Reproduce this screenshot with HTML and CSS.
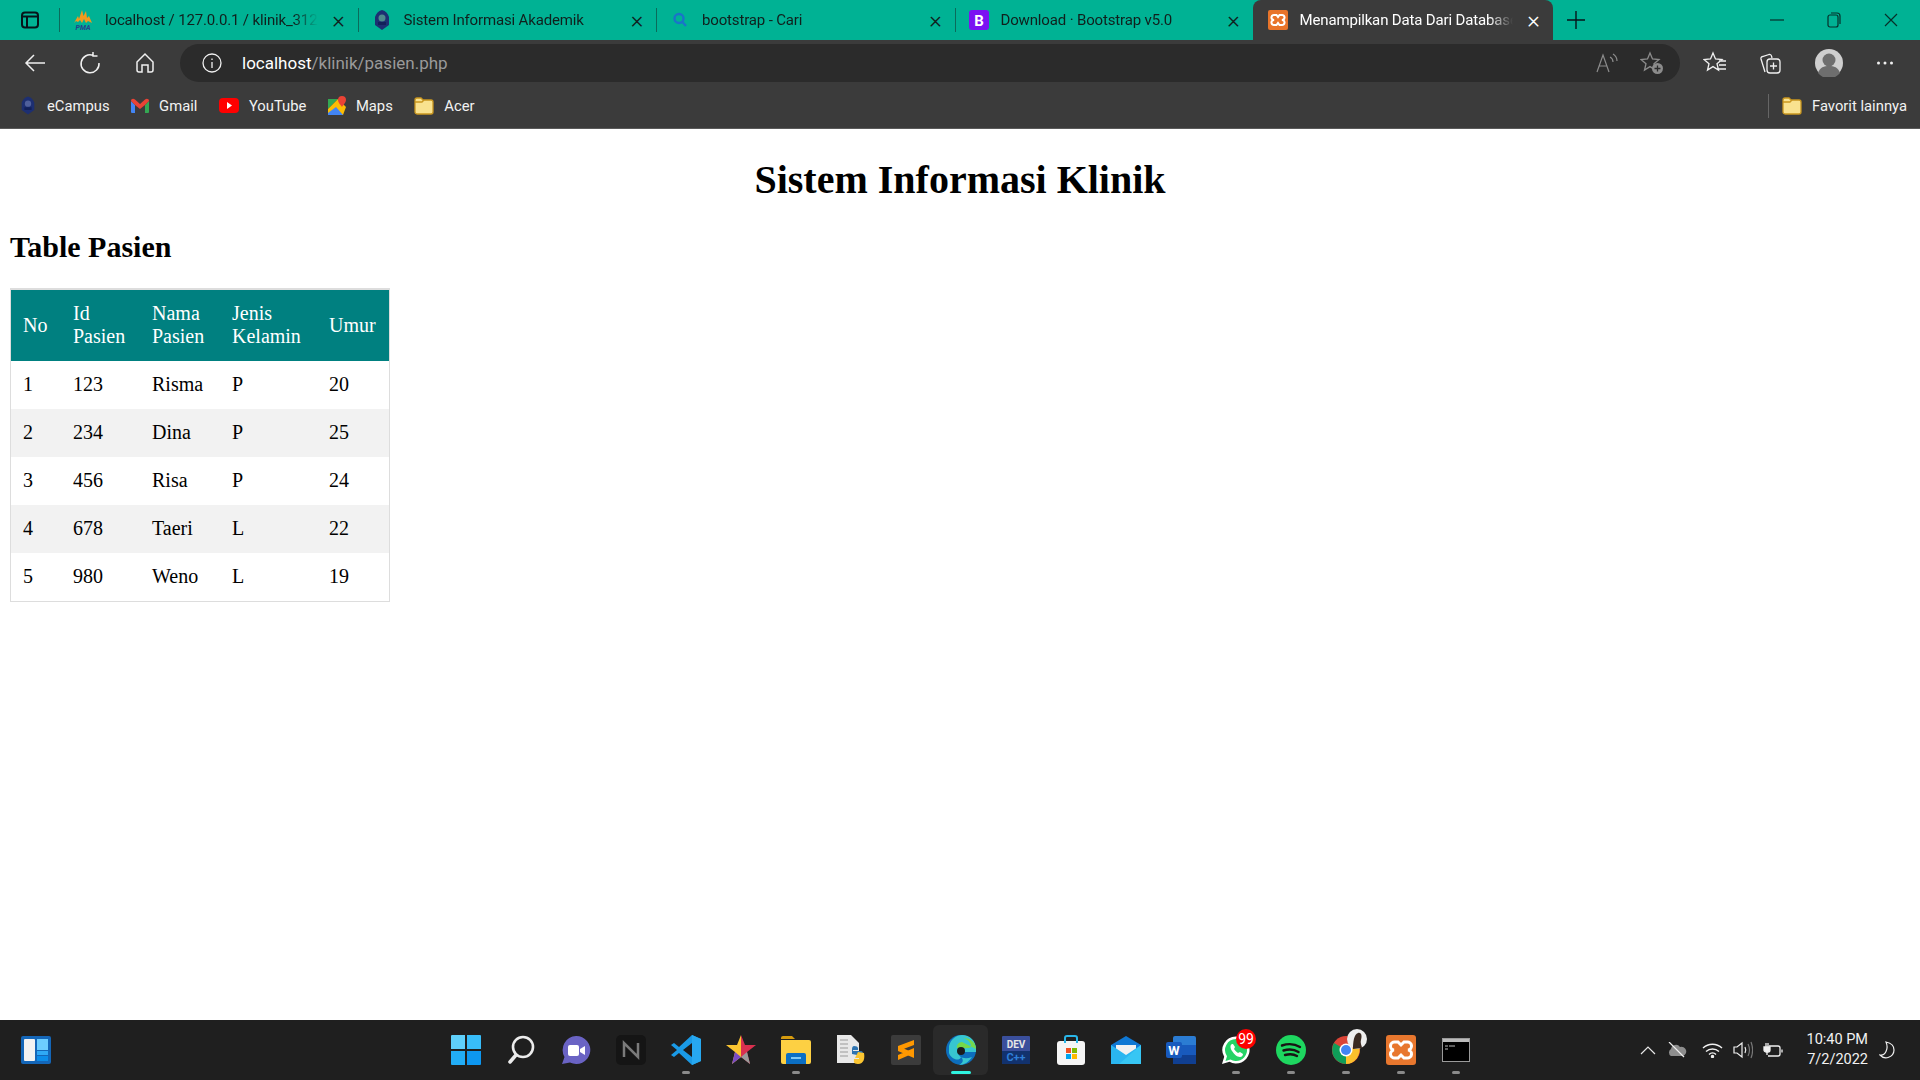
FILE: index.html
```html
<!DOCTYPE html>
<html lang="id">
<head>
  <meta charset="UTF-8">
  <title>Menampilkan Data Dari Database</title>
  <link rel="stylesheet" href="styles.css">
</head>
<body>
  <div class="screen">
    <!-- tab strip -->
    <div class="tabstrip">
      <div class="tab-actions">
        <svg class="tabs-btn" width="18" height="18" viewBox="0 0 18 18" fill="none" stroke="#06141a" stroke-width="2"><rect x="1" y="1.5" width="16" height="15" rx="3"/><path d="M1 5.5h16M6 5.500v11"/></svg>
      </div>
      <div class="tab">
        <svg class="favicon" viewBox="0 0 20 20"><path d="M1 13 5 6l1 3 3-9 1.500 6L13 1l1 7 2-2 3 7-4-2-2 2-2-4-2 4-2-3-2 2-2-1-2 2z" fill="#f29a1d"/><text x="10" y="19.500" class="pma">PMA</text></svg>
        <span class="tab-title">localhost / 127.0.0.1 / klinik_3120</span>
        <span class="tab-close">×</span>
      </div>
      <div class="tab">
        <svg class="favicon" viewBox="0 0 20 20"><path d="M10 0c4 1 6 4 7 7v8l-7 5-7-5V7c1-3 3-6 7-7z" fill="#1d2f72"/><circle cx="10" cy="8" r="3.500" fill="#4f8a8b"/><path d="M6 12h8v3H6z" fill="#12205a"/></svg>
        <span class="tab-title">Sistem Informasi Akademik</span>
        <span class="tab-close">×</span>
      </div>
      <div class="tab">
        <svg class="favicon" viewBox="0 0 20 20" fill="none" stroke="#1a73c9" stroke-width="2.400"><circle cx="9" cy="8.500" r="4.500"/><path d="m12.500 12 3.500 4"/></svg>
        <span class="tab-title">bootstrap - Cari</span>
        <span class="tab-close">×</span>
      </div>
      <div class="tab tab-last">
        <svg class="favicon" viewBox="0 0 20 20"><rect width="20" height="20" rx="3" fill="#7b12f2"/><text x="10" y="15.500" class="favicon-b">B</text></svg>
        <span class="tab-title">Download · Bootstrap v5.0</span>
        <span class="tab-close">×</span>
      </div>
      <div class="tab tab-active">
        <svg class="favicon" viewBox="0 0 20 20"><rect width="20" height="20" rx="2" fill="#e8742a"/><path d="M6 5h2.500l1.500 2 1.500-2H14a2.500 2.500 0 0 1 1 4.800l-1 .2 1 .2A2.500 2.500 0 0 1 14 15h-2.500L10 13l-1.500 2H6a2.500 2.500 0 0 1-1-4.800l1-.2-1-.2A2.500 2.500 0 0 1 6 5z" fill="none" stroke="#fff" stroke-width="2"/></svg>
        <span class="tab-title">Menampilkan Data Dari Database</span>
        <span class="tab-close">×</span>
      </div>
      <svg class="new-tab" width="18" height="18" viewBox="0 0 18 18" stroke="#06141a" stroke-width="1.400"><path d="M9 0v18M0 9h18"/></svg>
      <div class="window-btns">
        <svg width="14" height="14" viewBox="0 0 14 14" stroke="#06302a" stroke-width="1.200"><path d="M0 7h14"/></svg>
        <svg width="14" height="16" viewBox="0 0 14 16" fill="none" stroke="#06302a" stroke-width="1.200"><rect x="1" y="3" width="10" height="12" rx="2"/><path d="M4 1h6a3 3 0 0 1 3 3v8"/></svg>
        <svg width="14" height="14" viewBox="0 0 14 14" stroke="#06302a" stroke-width="1.200"><path d="m1 1 12 12M13 1 1 13"/></svg>
      </div>
    </div>

    <!-- address bar -->
    <div class="toolbar">
      <div class="nav-btns">
        <svg width="22" height="22" viewBox="0 0 22 22" fill="none" stroke="#f0f0f0" stroke-width="1.500"><path d="M21 11H2M10 3l-8 8 8 8"/></svg>
        <svg width="22" height="22" viewBox="0 0 22 22" fill="none" stroke="#f0f0f0" stroke-width="1.500"><path d="M14 3.300A9 9 0 1 0 20 11M14 0v4h4.500"/></svg>
        <svg width="22" height="22" viewBox="0 0 22 22" fill="none" stroke="#f0f0f0" stroke-width="1.500"><path d="M3 10 11 2l8 8v8a2 2 0 0 1-2 2h-3v-7H8v7H5a2 2 0 0 1-2-2z"/></svg>
      </div>
      <div class="addressbar">
        <svg width="20" height="20" viewBox="0 0 20 20" fill="none" stroke="#f0f0f0" stroke-width="1.300"><circle cx="10" cy="10" r="9"/><path d="M10 9v6M10 5.500v1.500"/></svg>
        <span class="url"><span class="url-host">localhost</span>/klinik/pasien.php</span>
        <svg class="read-aloud" width="24" height="22" viewBox="0 0 24 22" fill="none" stroke="#8c8c8c" stroke-width="1.200"><path d="m2 20 6-17 6 17M4.500 14h7M15 5c2 1 3 2.500 3 5M18 2c3 2 4 4 4 7"/></svg>
        <svg class="add-fav" width="24" height="24" viewBox="0 0 24 24" fill="none" stroke="#8c8c8c" stroke-width="1.300"><path d="m10 2 2.500 6 6.500.5-5 4.200 1.500 6.300-5.500-3.400L4.500 19l1.500-6.300-5-4.200L7.500 8z"/><circle cx="17.500" cy="17.500" r="5.500" fill="#8c8c8c" stroke="none"/><path d="M17.500 14.500v6M14.500 17.500h6" stroke="#2b2b2b"/></svg>
      </div>
      <div class="tool-btns">
        <svg width="24" height="24" viewBox="0 0 24 24" fill="none" stroke="#f0f0f0" stroke-width="1.300"><path d="m10 2 2.500 6 6.500.5-5 4.200 1.500 6.300-5.500-3.400L4.500 19l1.500-6.300-5-4.200L7.500 8zM16 10h7M16 14h7M15 18h8"/></svg>
        <svg width="24" height="24" viewBox="0 0 24 24" fill="none" stroke="#f0f0f0" stroke-width="1.300"><path d="M7 21 3 8a2 2 0 0 1 1.500-2.500L11 3.500A2 2 0 0 1 13.500 5L14 7"/><rect x="9" y="8" width="13" height="14" rx="3"/><path d="M15.500 11.500v7M12 15h7"/></svg>
        <svg class="avatar" width="28" height="28" viewBox="0 0 28 28"><circle cx="14" cy="14" r="14" fill="#cfcfcf"/><circle cx="14" cy="11" r="6.500" fill="#6e6e6e"/><path d="M3 24c2-6 6-7 11-7s9 1 11 7a14 14 0 0 1-22 0z" fill="#6e6e6e"/></svg>
        <svg width="18" height="4" viewBox="0 0 18 4" fill="#f0f0f0"><circle cx="2.500" cy="2" r="1.500"/><circle cx="9" cy="2" r="1.500"/><circle cx="15.500" cy="2" r="1.500"/></svg>
      </div>
    </div>

    <!-- favorites -->
    <div class="bookmarks">
      <div class="bookmark bookmark-campus">
        <svg width="18" height="21" viewBox="0 0 20 20"><path d="M10 0c4 1 6 4 7 7v8l-7 5-7-5V7c1-3 3-6 7-7z" fill="#1d2f72"/><circle cx="10" cy="8" r="3.500" fill="#4f5f9b"/><path d="M6 12h8v3H6z" fill="#12205a"/></svg>
        <span>eCampus</span>
      </div>
      <div class="bookmark bookmark-gmail">
        <svg width="18" height="16" viewBox="0 0 18 16"><path d="M0 3v11a1 1 0 0 0 1 1h3V7z" fill="#4285f4"/><path d="M18 3v11a1 1 0 0 1-1 1h-3V7z" fill="#34a853"/><path d="M0 3c0-2 2-3 4-1.500L9 6l5-4.500C16 0 18 1 18 3l-4 4-5 4-5-4z" fill="#ea4335"/></svg>
        <span>Gmail</span>
      </div>
      <div class="bookmark bookmark-youtube">
        <svg width="20" height="15" viewBox="0 0 20 15"><rect width="20" height="15" rx="4" fill="#f00"/><path d="m8 4 5 3.500L8 11z" fill="#fff"/></svg>
        <span>YouTube</span>
      </div>
      <div class="bookmark bookmark-maps">
        <svg width="18" height="20" viewBox="0 0 18 20"><path d="M0 3h10L0 13z" fill="#34a853"/><path d="M0 13 10 3l8 8-3 8H0z" fill="#fbbc04"/><path d="M0 19h15L8 11 0 17z" fill="#4285f4"/><path d="M14 0a4 4 0 0 1 4 4c0 3-4 6-4 7-1-2-4-4-4-7a4 4 0 0 1 4-4z" fill="#ea4335"/></svg>
        <span>Maps</span>
      </div>
      <div class="bookmark">
        <svg class="folder-icon" width="20" height="18" viewBox="0 0 20 18"><path d="M1 3a2 2 0 0 1 2-2h4l2 2h8a2 2 0 0 1 2 2v10a2 2 0 0 1-2 2H3a2 2 0 0 1-2-2z" fill="#f9e28f" stroke="#c9961f" stroke-width="1.300"/><path d="M1 5h7l2-2" fill="none" stroke="#c9961f" stroke-width="1.300"/></svg>
        <span>Acer</span>
      </div>
      <div class="bookmark bookmark-other">
        <svg class="folder-icon" width="20" height="18" viewBox="0 0 20 18"><path d="M1 3a2 2 0 0 1 2-2h4l2 2h8a2 2 0 0 1 2 2v10a2 2 0 0 1-2 2H3a2 2 0 0 1-2-2z" fill="#f9e28f" stroke="#c9961f" stroke-width="1.300"/><path d="M1 5h7l2-2" fill="none" stroke="#c9961f" stroke-width="1.300"/></svg>
        <span>Favorit lainnya</span>
      </div>
    </div>

    <!-- the page itself -->
    <main class="page">
      <h1>Sistem Informasi Klinik</h1>
      <h2>Table Pasien</h2>
      <table class="patients">
        <colgroup>
          <col class="col-no"><col class="col-id"><col class="col-name"><col class="col-gender"><col class="col-age">
        </colgroup>
        <thead>
          <tr><th>No</th><th>Id Pasien</th><th>Nama Pasien</th><th>Jenis Kelamin</th><th>Umur</th></tr>
        </thead>
        <tbody>
          <tr><td>1</td><td>123</td><td>Risma</td><td>P</td><td>20</td></tr>
          <tr><td>2</td><td>234</td><td>Dina</td><td>P</td><td>25</td></tr>
          <tr><td>3</td><td>456</td><td>Risa</td><td>P</td><td>24</td></tr>
          <tr><td>4</td><td>678</td><td>Taeri</td><td>L</td><td>22</td></tr>
          <tr><td>5</td><td>980</td><td>Weno</td><td>L</td><td>19</td></tr>
        </tbody>
      </table>
    </main>

    <!-- windows taskbar -->
    <footer class="taskbar">
      <div class="widgets">
        <svg width="30" height="28" viewBox="0 0 30 28"><rect width="30" height="28" rx="2" fill="#1466b8"/><rect x="3" y="3" width="11" height="22" rx="1" fill="#f2f2f2"/><rect x="16" y="3" width="11" height="11" fill="#6dcdff"/><rect x="16" y="15" width="11" height="4" fill="#2fa8f5"/><rect x="16" y="20" width="11" height="5" fill="#0c8ce9"/></svg>
      </div>
      <div class="apps">
        <div class="app"><svg width="30" height="30" viewBox="0 0 30 30"><path d="M1 0h13v14H0V1a1 1 0 0 1 1-1z" fill="#5fd0fb"/><path d="M16 0h13a1 1 0 0 1 1 1v13H16z" fill="#38bdf9"/><path d="M0 16h14v14H1a1 1 0 0 1-1-1z" fill="#22adf6"/><path d="M16 16h14v13a1 1 0 0 1-1 1H16z" fill="#0d97f0"/></svg></div>
        <div class="app"><svg width="28" height="30" viewBox="0 0 28 30" fill="none" stroke="#ececec"><circle cx="16" cy="12" r="10" stroke-width="2.600"/><path d="m9 20-6 7" stroke-width="3.500" stroke-linecap="round"/></svg></div>
        <div class="app"><svg width="30" height="30" viewBox="0 0 30 30"><path d="M15 1a14 14 0 1 1-6 26.500L1 29l2.500-7A14 14 0 0 1 15 1z" fill="#6a63c4"/><rect x="7" y="10" width="11" height="11" rx="2" fill="#fff"/><path d="m19 14 5-3v9l-5-3z" fill="#fff"/></svg></div>
        <div class="app"><svg width="30" height="30" viewBox="0 0 30 30"><rect width="30" height="30" rx="5" fill="#151515"/><path d="M8 22V8l14 14V8" fill="none" stroke="#7a7a7a" stroke-width="2.500"/></svg></div>
        <div class="app app-open"><svg width="30" height="30" viewBox="0 0 30 30"><path d="M21 0 30 4v22l-9 4L8 18l-5 4-3-2 6-5-6-5 3-2 5 4z" fill="#1a9ae6"/><path d="M21 0 30 4v22l-9 4z" fill="#27a8f0"/><path d="M21 8v14l-9-7z" fill="#1c1c1c"/></svg></div>
        <div class="app"><svg width="30" height="30" viewBox="0 0 30 30"><path d="m15 0 4 10h11l-9 7 3 12-9-7z" fill="#d9304f"/><path d="m15 0-4 10H0l9 7-3 12 9-7z" fill="#fbc531"/><path d="M9 17 6 29l9-7z" fill="#7b4bc4"/><path d="m21 17 3 12-9-7z" fill="#9a9a9a"/></svg></div>
        <div class="app app-open"><svg width="30" height="28" viewBox="0 0 30 28"><path d="M0 2a2 2 0 0 1 2-2h9l3 3H0z" fill="#d69b0e"/><path d="M0 4h28a2 2 0 0 1 2 2v20a2 2 0 0 1-2 2H2a2 2 0 0 1-2-2z" fill="#fdd043"/><path d="M5 19a2 2 0 0 1 2-2h16a2 2 0 0 1 2 2v9H5z" fill="#0b6fc4"/><path d="M10 22h10" stroke="#7ec8f5" stroke-width="2"/></svg></div>
        <div class="app"><svg width="28" height="30" viewBox="0 0 28 30"><path d="M0 0h14l8 8v20H0z" fill="#e8e8e8"/><path d="M3 5h8M3 9h8M3 13h8M3 17h8M3 21h8" stroke="#9a9a9a"/><path d="M17 11c5 0 4 3 4 4h-5v1h8c3 0 3 7-2 7h-2v-3l-5-1v-5c0-2 1-3 2-3z" fill="#2e73b0"/><path d="M21 29c-5 0-4-3-4-5h5v-1h-4l3-6 6 1c1 5 0 11-6 11z" fill="#fbc531"/></svg></div>
        <div class="app"><svg width="30" height="30" viewBox="0 0 30 30"><rect width="30" height="30" rx="2" fill="#3b3b3b"/><path d="M7 11 23 5v5L7 16zM7 11l16 7v5L7 16zM23 18 7 25v-5l16-7z" fill="#ff9800"/></svg></div>
        <div class="app app-active"><svg width="30" height="30" viewBox="0 0 30 30"><circle cx="15" cy="15" r="15" fill="#0d6ebd"/><path d="M3 11C5 4 10 0 16 0c8 0 14 6 14 14v3H12c0 5 6 8 14 5-3 5-8 8-13 8 4-2 5-5 2-8-2 5-10 2-12-4z" fill="#37c6d0"/><path d="M30 14c0-5-4-11-13-11 5 1 8 5 8 8 0 2-2 2-6 2H11c-1-3 2-6 5-6" fill="#75d84c"/><circle cx="15" cy="16" r="4" fill="#1c1c1c"/></svg></div>
        <div class="app"><svg width="28" height="28" viewBox="0 0 28 28"><rect width="28" height="28" rx="1" fill="#3a4f9c"/><rect y="15" width="28" height="13" fill="#12326e"/><text x="14" y="12" class="dev-label">DEV</text><text x="14" y="25" class="cpp-label">C++</text></svg></div>
        <div class="app"><svg width="30" height="30" viewBox="0 0 30 30"><rect x="1" y="6" width="28" height="24" rx="3" fill="#f5f5f5"/><path d="M9 8V3a2 2 0 0 1 2-2h8a2 2 0 0 1 2 2v5" fill="none" stroke="#29b6e8" stroke-width="2"/><rect x="10" y="13" width="5" height="5" fill="#f25022"/><rect x="16" y="13" width="5" height="5" fill="#7fba00"/><rect x="10" y="19" width="5" height="5" fill="#00a4ef"/><rect x="16" y="19" width="5" height="5" fill="#ffb900"/></svg></div>
        <div class="app"><svg width="30" height="28" viewBox="0 0 30 28"><path d="M15 0 30 9v19H0V9z" fill="#0f78d4"/><path d="M5 9h20v7l-10 5-10-5z" fill="#f1f1f1"/><path d="m0 9 15 10L30 9v19H0z" fill="#2ab6f0"/><path d="M30 9v19H8z" fill="#37c6f4"/></svg></div>
        <div class="app"><svg width="30" height="28" viewBox="0 0 30 28"><rect x="7" width="23" height="28" rx="2" fill="#2b7cd3"/><rect x="7" y="9" width="23" height="10" fill="#185abd"/><rect x="7" y="19" width="23" height="9" fill="#103f91"/><rect y="6" width="16" height="16" rx="2" fill="#185abd"/><text x="8" y="18.500" class="word-label">W</text></svg></div>
        <div class="app app-open">
          <svg width="30" height="30" viewBox="0 0 30 30"><path d="M15 1.500a13.500 13.500 0 1 1-6.500 25.300L1 29l2.200-7.200A13.500 13.500 0 0 1 15 1.500z" fill="#fff"/><path d="M15 4a11 11 0 1 1-5.500 20.500L4.500 26 6 21.200A11 11 0 0 1 15 4z" fill="#25d366"/><path d="M11 9c-2 1-2 4 0 7s5 6 8 6c2 0 3-2 3-3l-3-2-2 1c-2-1-3-3-4-4l1-2-2-3z" fill="#fff"/></svg>
          <span class="badge">99</span>
        </div>
        <div class="app app-open"><svg width="30" height="30" viewBox="0 0 30 30"><circle cx="15" cy="15" r="15" fill="#1ed760"/><path d="M6 10.500c6-2 13-1.500 18 1.500M7.500 15.500c5-1.500 11-1 15 1.500M9 20c4-1 9-.8 12 1" fill="none" stroke="#191414" stroke-width="2.400" stroke-linecap="round"/></svg></div>
        <div class="app app-open">
          <svg width="30" height="30" viewBox="0 0 30 30"><circle cx="15" cy="15" r="14" fill="#db4437"/><path d="M15 15 28 11a14 14 0 0 1-13 18z" fill="#fbc02d"/><path d="M15 15 15 29A14 14 0 0 1 3 8z" fill="#0f9d58"/><circle cx="15" cy="15" r="6.500" fill="#fff"/><circle cx="15" cy="15" r="5" fill="#4285f4"/></svg>
          <svg class="profile-dot" width="20" height="20" viewBox="0 0 20 20"><circle cx="10" cy="10" r="10" fill="#eee"/><path d="M6 20c0-7 1-15 5-16s4 4 3 7 1 6 1 8z" fill="#3a2a22"/></svg>
        </div>
        <div class="app app-open"><svg width="30" height="30" viewBox="0 0 30 30"><rect width="30" height="30" rx="3" fill="#e8772e"/><path d="M9 7h3l3 3 3-3h3a4 4 0 0 1 1 8 4 4 0 0 1-1 8h-3l-3-3-3 3H9a4 4 0 0 1-1-8 4 4 0 0 1 1-8z" fill="none" stroke="#fff" stroke-width="3"/></svg></div>
        <div class="app app-open"><svg width="28" height="24" viewBox="0 0 28 24"><rect x=".5" y=".5" width="27" height="23" fill="#000" stroke="#9a9a9a"/><path d="M1 1h26v3H1z" fill="#bbb"/><path d="M3 8h3M7 8h6M3 11h3" stroke="#bbb"/></svg></div>
      </div>
      <div class="tray">
        <svg width="16" height="9" viewBox="0 0 16 9" fill="none" stroke="#e8e8e8" stroke-width="1.200"><path d="m1 8 7-7 7 7"/></svg>
        <svg class="tray-cloud" width="20" height="16" viewBox="0 0 20 16"><path d="M4 14a4 4 0 0 1 0-7 5 5 0 0 1 9-2 4.500 4.500 0 0 1 3 9z" fill="#8d8d8d"/><path d="m2 0 15 15" stroke="#eee" stroke-width="1.200"/></svg>
        <svg class="tray-wifi" width="21" height="15" viewBox="0 0 21 15" fill="none" stroke="#f0f0f0" stroke-width="1.400"><path d="M1 5a14 14 0 0 1 19 0M4 8.500a9.500 9.500 0 0 1 13 0M7 11.500a5 5 0 0 1 7 0"/><circle cx="10.500" cy="13.500" r="1" fill="#f0f0f0"/></svg>
        <svg width="20" height="18" viewBox="0 0 20 18" fill="none" stroke="#f0f0f0" stroke-width="1.200"><path d="M1 6h3l5-4v14l-5-4H1zM12 6c1 2 1 4 0 6"/><path d="M15 3c2 4 2 8 0 12M18 1c2 5 2 11 0 16" stroke="#777"/></svg>
        <svg width="20" height="16" viewBox="0 0 20 16" fill="none" stroke="#f0f0f0" stroke-width="1.300"><path d="M6 4h9a2 2 0 0 1 2 2v6a2 2 0 0 1-2 2H5M19 7.500v3"/><path d="M1 5h6v3a2 2 0 0 1-2 2H3a2 2 0 0 1-2-2zM3 1v4M5 1v4M4 10v3" fill="#f0f0f0"/></svg>
        <div class="clock"><div>10:40 PM</div><div>7/2/2022</div></div>
        <svg class="moon" width="16" height="19" viewBox="0 0 16 19" fill="none" stroke="#f0f0f0" stroke-width="1.200"><path d="M7 1c6 1 8 5 8 8a8 8 0 0 1-14 5c5 1 9-6 6-13z"/></svg>
      </div>
    </footer>
  </div>
</body>
</html>
```

FILE: styles.css
```css
* {
  box-sizing: border-box;
}
html, body {
  margin: 0;
  height: 100%;
}
body {
  overflow: hidden;
  font-family: Roboto, "Open Sans", sans-serif;
}
svg {
  display: block;
  flex-shrink: 0;
}
.screen {
  display: flex;
  flex-direction: column;
  height: 1080px;
}

/* tab strip */
.tabstrip {
  display: flex;
  align-items: stretch;
  height: 40px;
  background-color: #00b294;
  color: #10201d;
  font-size: 15px;
}
.tab-actions {
  display: flex;
  align-items: center;
  width: 59px;
  padding-left: 21px;
}
.tabs-btn {
  margin-top: -1px;
}
.tab {
  position: relative;
  display: flex;
  align-items: center;
  width: 298.500px;
  padding: 0 10px 0 14px;
  gap: 12px;
}
.tab::before {
  content: "";
  position: absolute;
  left: 0;
  top: 8px;
  height: 24px;
  border-left: 1px solid #0b6b5b;
}
.tab-last {
  width: 298px;
}
.tab-active {
  width: 300px;
  padding-left: 15px;
  background-color: #3b3b3b;
  border-radius: 8px 8px 0 0;
  color: #fff;
}
.tab-active::before {
  display: none;
}
.favicon {
  width: 20px;
  height: 20px;
}
.pma {
  font-size: 7px;
  font-weight: 700;
  font-style: italic;
  text-anchor: middle;
  fill: #24408e;
}
.favicon-b {
  font-size: 15px;
  font-weight: 700;
  text-anchor: middle;
  fill: #fff;
}
.tab-title {
  flex: 1;
  overflow: hidden;
  white-space: nowrap;
  letter-spacing: -.15px;
  -webkit-mask-image: linear-gradient(to left, transparent 0, #000 24px);
  mask-image: linear-gradient(to left, transparent 0, #000 24px);
}
.tab-close {
  width: 18px;
  font-size: 24px;
  font-weight: 300;
  line-height: 24px;
  text-align: center;
}
.new-tab {
  align-self: center;
  margin-left: 14px;
}
.window-btns {
  display: flex;
  align-items: center;
  gap: 43px;
  margin-left: auto;
  padding-right: 22px;
}

/* address bar */
.toolbar {
  display: flex;
  align-items: center;
  height: 45px;
  background-color: #3b3b3b;
}
.nav-btns {
  display: flex;
  align-items: center;
  gap: 33px;
  width: 180px;
  padding-left: 24px;
}
.addressbar {
  display: flex;
  align-items: center;
  width: 1500px;
  height: 38px;
  padding: 0 16px 0 22px;
  background-color: #2b2b2b;
  border-radius: 19px;
}
.url {
  margin-left: 20px;
  padding-top: 1px;
  color: #9a9a9a;
  font-size: 17px;
}
.url-host {
  color: #fff;
}
.read-aloud {
  margin-left: auto;
}
.add-fav {
  margin-left: 21px;
}
.tool-btns {
  display: flex;
  align-items: center;
  gap: 31px;
  padding-left: 23px;
}
.avatar {
  margin: 0 2px;
}

/* favorites */
.bookmarks {
  display: flex;
  align-items: center;
  height: 44px;
  padding: 0 13px 2px 19px;
  gap: 21.500px;
  background-color: #3b3b3b;
  border-bottom: 1px solid #5a5a5a;
  color: #f2f2f2;
  font-size: 14.800px;
}
.bookmark {
  display: flex;
  align-items: center;
  gap: 10px;
}
.bookmark-other {
  margin-left: auto;
  padding-left: 13px;
  border-left: 1px solid #666;
  height: 24px;
}

/* page content */
.page {
  flex: 1;
  padding: 27px 10px 0;
  background-color: #fff;
  color: #000;
  font-family: "Liberation Serif", serif;
}
h1 {
  margin: 0 0 27px;
  font-size: 40px;
  text-align: center;
}
h2 {
  margin: 0 0 23.500px;
  font-size: 30px;
}
.patients {
  width: 380px;
  table-layout: fixed;
  border-collapse: separate;
  border-spacing: 0;
  border: 1px solid #ddd;
  border-top-width: 2px;
  font-size: 20px;
}
.col-no { width: 50px; }
.col-id { width: 79px; }
.col-name { width: 80px; }
.col-gender { width: 97px; }
.col-age { width: 72px; }
.patients th,
.patients td {
  padding: 12.500px 12px;
  text-align: left;
}
.patients th {
  background-color: #008080;
  color: #fff;
  font-weight: 400;
}
.patients tbody tr:nth-child(even) {
  background-color: #f2f2f2;
}

/* taskbar */
.taskbar {
  position: relative;
  display: flex;
  align-items: center;
  justify-content: center;
  height: 60px;
  background-color: #1f1f1f;
  color: #fff;
}
.widgets {
  position: absolute;
  left: 21px;
  top: 16px;
}
.apps {
  display: flex;
  align-items: center;
  margin-left: 1px;
}
.app {
  position: relative;
  display: flex;
  align-items: center;
  justify-content: center;
  width: 55px;
  height: 50px;
}
.app-open::after,
.app-active::after {
  content: "";
  position: absolute;
  left: 50%;
  bottom: 1px;
  width: 8px;
  height: 3px;
  margin-left: -4px;
  background-color: #8a8a8a;
  border-radius: 2px;
}
.app-active {
  background-color: #2a2a2a;
  border-radius: 6px;
}
.app-active::after {
  width: 20px;
  margin-left: -10px;
  background-color: #2ff3e0;
}
.badge {
  position: absolute;
  top: 4px;
  right: 7px;
  width: 20px;
  height: 20px;
  background-color: #f00;
  border-radius: 50%;
  font-size: 14px;
  line-height: 20px;
  text-align: center;
}
.profile-dot {
  position: absolute;
  top: 4px;
  right: 6px;
}
.dev-label {
  font-size: 10px;
  font-weight: 700;
  text-anchor: middle;
  fill: #e6e6e6;
}
.cpp-label {
  font-size: 11px;
  font-weight: 700;
  text-anchor: middle;
  fill: #2f7fd8;
}
.word-label {
  font-size: 13px;
  font-weight: 700;
  text-anchor: middle;
  fill: #fff;
}
.tray {
  position: absolute;
  right: 25px;
  top: 0;
  display: flex;
  align-items: center;
  height: 60px;
  gap: 10px;
  font-size: 14.500px;
}
.tray-cloud {
  margin-left: 1px;
}
.tray-wifi {
  margin-left: 5px;
}
.clock {
  margin-left: 13px;
  line-height: 20px;
  color: #f2f2f2;
  text-align: right;
}
.moon {
  margin-left: 1px;
}
```
